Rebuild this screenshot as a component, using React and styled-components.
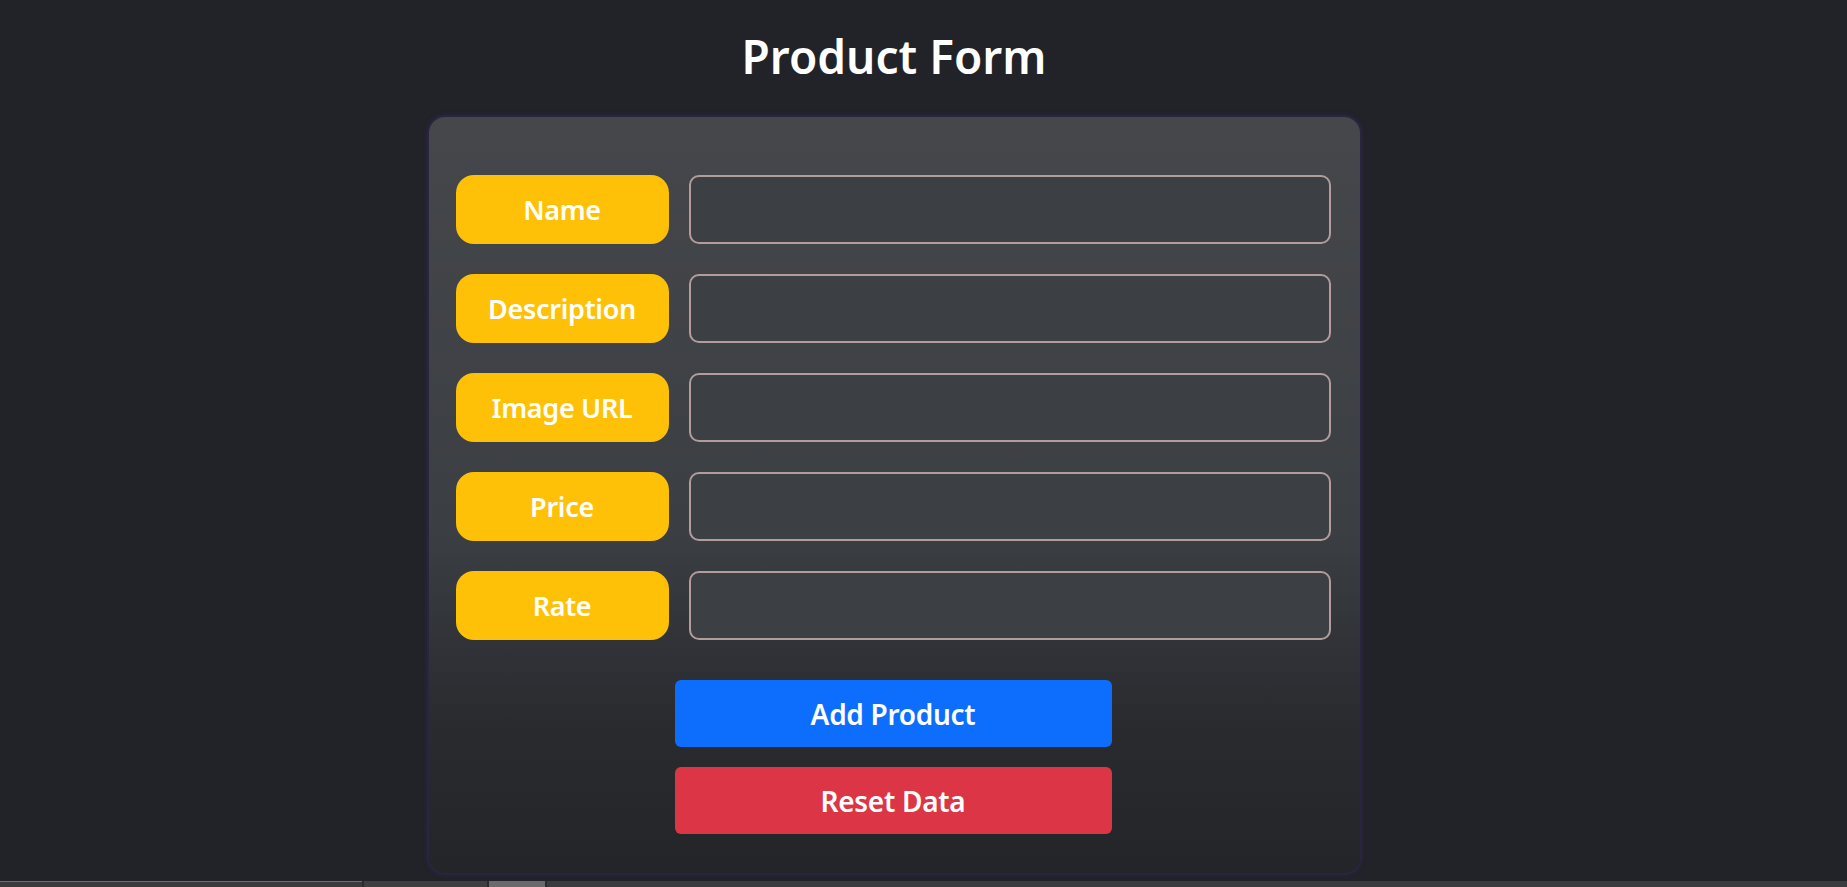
import React, { useState } from "react";
import styled, { createGlobalStyle } from "styled-components";

const GlobalStyle = createGlobalStyle`
  * { box-sizing: border-box; }
  html, body {
    margin: 0;
    padding: 0;
    background: #212328;
    font-family: "Noto Sans", "Open Sans", "Liberation Sans", sans-serif;
  }
`;

const Page = styled.div`
  min-height: 887px;
  display: flex;
  flex-direction: column;
`;

const Main = styled.main`
  display: flex;
  flex-direction: column;
  align-items: center;
  padding: 24px 59px 0 0;
`;

const Title = styled.h1`
  margin: 0 0 27px;
  color: #ffffff;
  font-size: 46px;
  line-height: 64px;
  font-weight: 600;
`;

const Card = styled.form`
  width: 935px;
  border: 2px solid #2b2440;
  border-radius: 18px;
  box-shadow: 0 0 4px rgba(52, 36, 88, 0.6);
  background: linear-gradient(180deg, #45474b 0%, #3b3e42 55%, #292b2f 80%, #232529 100%);
  padding: 58px 29px 39px 27px;
  display: flex;
  flex-direction: column;
`;

const Fields = styled.div`
  display: flex;
  flex-direction: column;
  gap: 30px;
`;

const Row = styled.div`
  display: grid;
  grid-template-columns: 213px 1fr;
  gap: 20px;
  height: 69px;
`;

const Label = styled.label`
  background: #ffc107;
  border-radius: 18px;
  color: #ffffff;
  font-size: 27px;
  font-weight: 600;
  letter-spacing: -0.3px;
  display: flex;
  align-items: center;
  justify-content: center;
`;

const Input = styled.input`
  height: 69px;
  background: #3c3f43;
  border: 2px solid #b39c9c;
  border-radius: 10px;
  color: #fff;
  font-size: 22px;
  padding: 0 16px;
  outline: none;
  font-family: inherit;
`;

const Actions = styled.div`
  margin-top: 40px;
  display: flex;
  flex-direction: column;
  align-items: center;
  gap: 20px;
`;

const Button = styled.button`
  width: 437px;
  height: 67px;
  border: none;
  border-radius: 6px;
  background: ${(p) => (p.$variant === "danger" ? "#dc3545" : "#0d6efd")};
  color: #ffffff;
  font-family: inherit;
  font-size: 28px;
  font-weight: 600;
  letter-spacing: -0.3px;
  cursor: pointer;
`;

const BottomStrip = styled.div`
  margin-top: auto;
  width: 100%;
  height: 6px;
  display: flex;
  gap: 2px;
  background: #2a2b2d;
`;

const StripSeg = styled.div`
  width: ${(p) => p.$w}px;
  flex: ${(p) => (p.$w ? "none" : "1")};
  background: ${(p) => p.$bg};
  border-top: 1px solid ${(p) => p.$line || "transparent"};
`;

const fields = [
  { key: "name", label: "Name" },
  { key: "description", label: "Description" },
  { key: "image", label: "Image URL" },
  { key: "price", label: "Price" },
  { key: "rate", label: "Rate" },
];

export default function App() {
  const empty = { name: "", description: "", image: "", price: "", rate: "" };
  const [data, setData] = useState(empty);

  return (
    <>
      <GlobalStyle />
      <Page>
        <Main>
          <Title>Product Form</Title>
          <Card onSubmit={(e) => e.preventDefault()}>
            <Fields>
              {fields.map((f) => (
                <Row key={f.key}>
                  <Label htmlFor={f.key}>{f.label}</Label>
                  <Input
                    id={f.key}
                    value={data[f.key]}
                    onChange={(e) => setData({ ...data, [f.key]: e.target.value })}
                  />
                </Row>
              ))}
            </Fields>
            <Actions>
              <Button type="submit">Add Product</Button>
              <Button type="button" $variant="danger" onClick={() => setData(empty)}>
                Reset Data
              </Button>
            </Actions>
          </Card>
        </Main>
        <BottomStrip>
          <StripSeg $w={362} $bg="#3b3b3c" $line="#707070" />
          <StripSeg $w={123} $bg="#3f3f40" />
          <StripSeg $w={56} $bg="#6a6a6a" />
          <StripSeg $bg="#3a3b3d" />
        </BottomStrip>
      </Page>
    </>
  );
}
